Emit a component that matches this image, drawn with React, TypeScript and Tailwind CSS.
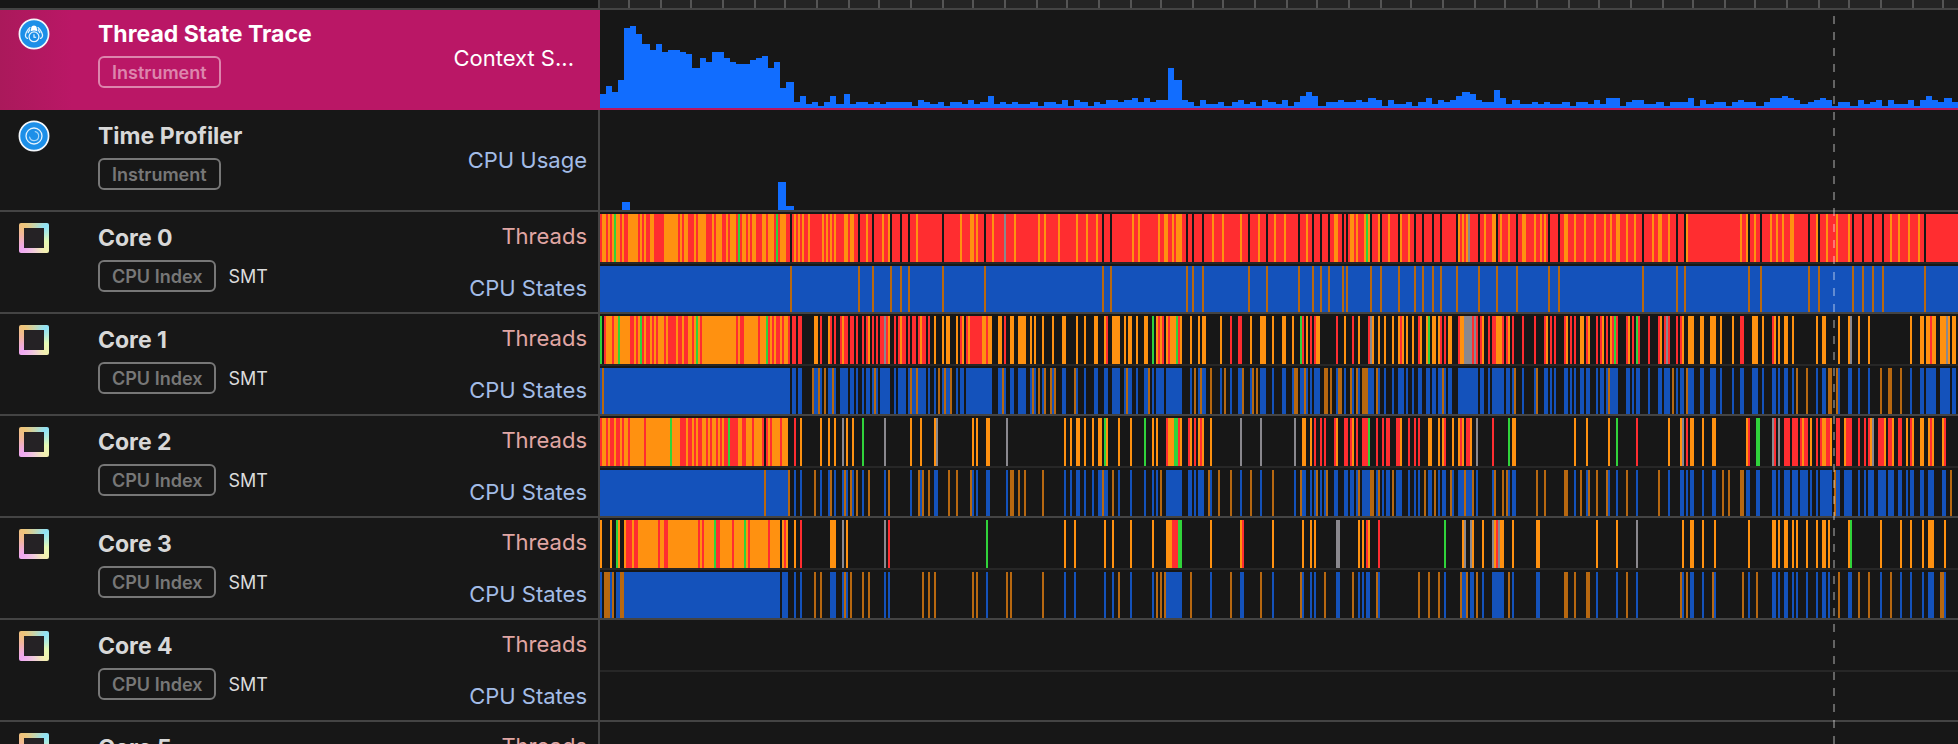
import React from 'react';

const CELLS = 679;

const COLOURS: Record<string, string> = {
  r: '#ff2d30',
  o: '#ff9110',
  g: '#30d33b',
  y: '#8a888e',
};

const RULER_TICKS = [
  14, 30, 45, 61, 77, 92, 108, 124, 139, 155, 171, 186, 202, 218, 233, 249, 265, 280, 296, 311, 327,
  343, 358, 374, 390, 405, 421, 437, 452, 468, 484, 499, 515, 531, 546, 562, 577, 593, 609, 624, 640,
  656, 671,
];

// "start:height" steps; each step holds until the next one.
const CONTEXT_SWITCHES =
  '0:7 3:11 6:8 9:14 12:40 15:41 18:37 21:32 25:29 28:32 31:28 34:29 40:28 43:27 46:20 50:25 53:23 56:28 62:25 65:23 68:22 75:24 78:25 81:26 84:20 87:23 90:10 93:13 97:3 100:6 103:2 106:3 109:1 112:3 115:6 118:2 122:7 125:2 128:3 134:2 137:3 140:2 143:3 156:1 159:4 162:3 165:2 169:3 172:1 175:3 181:2 184:4 187:2 190:3 194:6 197:2 200:3 203:2 206:3 209:2 215:3 219:1 222:3 228:2 ' +
  '231:4 234:1 237:4 240:3 244:1 247:3 250:2 253:4 259:3 262:4 266:5 269:3 272:5 275:3 278:4 284:20 287:14 291:4 294:3 297:1 300:4 303:2 309:3 312:1 316:3 319:4 322:2 325:3 328:1 331:4 334:3 338:2 341:4 344:1 347:3 350:6 353:8 356:6 359:1 363:3 369:4 372:3 378:4 381:3 384:5 388:4 391:1 394:4 397:2 403:3 406:1 409:3 413:5 416:2 419:4 422:3 425:4 428:6 431:8 435:7 438:4 441:3 447:9 ' +
  '450:5 453:2 456:4 460:2 466:3 469:2 472:3 475:2 481:3 485:1 488:3 494:2 497:4 500:2 503:5 510:1 513:3 516:4 522:2 528:3 532:1 535:3 544:5 547:1 550:4 553:2 557:3 563:1 566:3 569:4 572:3 578:1 582:3 585:5 591:6 594:5 597:4 600:2 604:3 607:4 610:5 613:4 616:1 619:3 625:1 629:4 632:2 635:3 638:4 641:1 644:4 647:2 654:4 657:1 660:4 663:6 666:4 669:3 672:5 676:3';

const CPU_USAGE = '11:4 15:0 89:14 93:2 97:0';

interface CoreData {
  // Colour changes: a colour key and the cell where it begins ("k" is idle).
  threads: string;
  // Cells (or cell ranges) where the core is in the interrupt state.
  interrupts: string;
}

const CORES: CoreData[] = [
  {
    threads:
      'r0 o1 r3 o4 r5 o6 g7 o8 r10 o11 r12 o14 r19 o20 r21 o22 r23 o25 r27 o32 r39 o40 r41 o42 r44 o47 r48 o49 r53 o56 r57 o58 r61 o63 r64 o65 r68 g69 r70 o71 r73 o74 r75 o76 r78 o81 r83 o84 r87 g88 r89 o90 r93 k95 r96 o97 r98 o99 r100 o101 r102 o104 r105 o111 r112 o113 r114 o115 r116 o117 r118 o122 r124 o125 r127 k129 r130 o133 r134 k136 r137 o141 r142 o144 k145 r146 k150 r151 k154 r155 o158 r159 k171 r172 o180 r181 o185 r187 o188 r189 k192 r193 o196 r197 y202 r203 o207 r208 o219 r220 o222 r223 o229 ' +
      'r230 o238 r239 o243 r244 o248 r249 k251 r252 k255 r256 o266 r267 o269 r270 o279 r280 o282 r284 o286 r287 o288 r291 k293 r294 k296 r297 k301 r302 o306 r307 o311 r312 o320 r321 k324 r325 o329 r330 k333 r334 o337 r338 o342 r343 k349 r350 o353 r354 k356 r357 k360 r361 k364 r365 o367 r369 k371 r372 k373 r374 o375 r377 o378 r379 o382 g383 o384 k385 r386 o389 k390 r391 o394 r395 k399 o400 r401 o404 r405 k407 r408 k411 r412 k416 r417 k420 r421 k428 o429 r430 o431 r432 o433 y434 r435 k439 r440 o442 r443 o446 k448 r449 ' +
      'o450 r451 o454 r455 k458 r459 o461 r463 o467 r468 o470 r471 o472 r473 k474 r475 k479 r480 o482 r484 o487 r488 o492 r493 o497 r498 o502 r503 o505 r506 o508 r510 o513 r514 o517 r518 k521 r522 o526 r527 o529 r531 o534 r535 k538 r539 k542 o543 r544 o570 r571 o573 k574 r575 o577 r578 k580 r581 o585 r586 o588 r589 o591 r592 o595 r597 k604 r605 o608 k609 r610 o613 r614 o618 r619 o624 r625 k626 r627 k631 r632 k636 r637 k641 r642 o645 r646 o649 r650 o654 r655 o659 r660 k662 r663',
    interrupts:
      '95 129 136 145 150 154 171 192 251 255 293 296 301 324 333 349 356 360 364 371 373 385 390 399 407 411 416 420 428 439 448 458 474 479 521 538 542 574 580 604 609 626 631 636 641 662',
  },
  {
    threads:
      'g0 k1 r2 o3 r6 o7 g9 o10 r15 o17 r18 o19 g20 r21 o22 r23 o25 r26 o27 r28 o29 r32 o33 r34 o38 r39 o41 r42 o44 r46 o47 g48 o49 r50 o51 r68 o69 r70 o72 r79 o80 g83 r84 o85 r86 o87 r88 o90 r91 o92 r94 k95 r96 k98 r99 k101 o107 k109 r110 k111 o114 r115 k116 r117 k118 r120 o121 r122 k124 r125 k127 r128 k129 r131 k132 r133 o134 k135 r136 k137 r138 k139 r140 y142 r143 o144 k145 r147 k148 r149 o150 r151 k153 r154 k155 r156 k158 r159 o160 r161 k163 r164 k165 o167 k168 o171 k172 o173 k175 o178 k179 r180 o181 k182 r183 o184 r185 o191 r193 o194 k196 o199 k201 r202 k203 o205 k207 o209 k213 o215 k216 o217 k218 o221 k222 o226 k227 ' +
      'o231 k233 o238 k239 o242 k243 o247 k249 o252 r253 k254 o256 k260 o262 k263 o264 k266 o268 k269 o272 k274 g276 k277 o278 r279 o280 r281 k282 o283 r284 o285 g288 r289 o290 k291 o295 k296 o299 k300 o301 k303 o310 k311 r315 k316 r319 k321 o325 k326 o330 k333 o336 k337 o341 k343 o346 k347 g350 r351 k352 o353 k354 r355 k356 r357 o358 k360 r368 k369 o372 k373 r376 k377 o379 k380 r384 y385 o386 k387 o389 k390 o392 k393 o396 k397 o399 r400 o401 k402 o403 k404 o406 k407 r409 o410 k411 o413 g414 k415 o416 k418 o419 r420 k421 r422 k423 o424 k426 r429 o430 y432 r436 y437 r438 k439 r440 o441 k442 r444 k445 r446 o448 r451 k452 r453 o454 k455 r456 k457 ' +
      'r461 k462 r467 k468 r472 o473 k474 r475 k476 r477 k478 r482 o483 k484 r485 k486 r487 k488 o490 k492 r493 o494 k495 r498 k499 r500 o501 k502 r503 k504 o505 r506 g507 r508 k509 r513 o514 k515 r516 k517 g518 r519 k520 r524 k525 r529 o530 k531 r532 y533 r534 k535 r538 k539 r540 o541 k542 o544 k547 o550 k552 o555 k558 o560 k561 o566 k567 r570 k572 o576 k579 o581 k582 r586 o587 k588 o589 k590 o592 k594 o596 k597 o608 k609 o611 k613 o619 k620 o624 y625 k626 o629 k630 o634 k635 o655 k656 o660 k662 o663 r665 o666 k668 o670 y673 o674 k675 o676 k678',
    interrupts:
      '1 106 109 112 116 137 155 158 169 172 175 201 216 219 222 225 227 237 263 274 297 300 305 312 321 326 328 347-348 352 362-363 365 369-370 375 378 381-383 388 421 457 468 504 536 543 598 603 614-615 618 640 644-645 650',
  },
  {
    threads:
      'r0 o1 r3 o4 r5 o7 r8 o10 r11 o12 r14 o15 r22 o23 g35 o36 r40 o43 r44 o46 r47 o48 r49 o51 r53 o54 r55 o56 r58 o59 r60 o61 r62 g64 r65 o69 r71 o73 r76 o77 r81 k82 r83 o84 r85 o86 r90 o91 k94 r97 k98 o100 k101 o110 k111 o114 k115 o117 k118 y121 k122 o123 k124 o126 k127 g131 k132 y142 k143 o155 k156 o160 k161 o167 y168 k169 o186 k187 o188 k189 o193 k195 y203 k204 ' +
      'o232 k233 o235 k236 o238 k240 o242 k243 o246 k247 o249 k251 g252 o253 k254 o259 k260 o265 k266 g272 k273 o276 k277 o278 k279 r283 o284 g287 r289 o290 k291 r294 o295 k296 r297 k298 o299 r300 o301 k302 o305 k306 y320 k321 y330 k331 y347 k348 o351 k353 o355 k356 r357 k358 r360 k361 r362 k363 r367 o368 k369 r372 k374 r375 o376 k377 r378 k379 r381 g384 k385 r388 k389 r391 k392 r393 k395 r398 o400 k401 r404 k405 r407 k408 r409 k410 o414 k416 o419 k420 o421 r422 k423 o426 k427 o429 r430 o431 k432 r433 o435 k436 y438 k439 r446 k447 g454 k455 o456 k458 ' +
      'o487 k488 o493 k494 o504 k505 g508 k509 r518 k519 o534 k535 o540 y541 k542 r543 k544 o545 k547 o551 k552 o556 k558 o573 r574 k575 g578 k580 y586 r587 k588 y589 k590 r592 k595 r596 k599 r600 o601 r602 k604 o605 k606 r608 k609 r610 o611 r613 o615 k616 r618 k620 o622 r623 k626 r629 k630 r632 k633 r634 o635 y636 k637 r639 o642 k643 r644 o646 k647 r649 k651 o653 k654 r655 o656 k657 o660 k662 o664 r665 o666 k667 o671 r672 k673',
    interrupts:
      '82 94 107 115 122 125 128 134 144 159 161 164 174 178 185 205-206 209 212 221 251 256 280 304 309 315 325 336 350 358 363 379 385-386 389 396 412 417 425 432 436 447 451 453 468 472 482-483 490 494 498 503 513 529 561 564 570-571 617 675',
  },
  {
    threads:
      'o0 k1 o5 k6 g8 o9 k10 o12 r13 o16 r17 o19 r29 o30 r32 o34 r49 o50 r51 o52 g57 r58 o60 r66 o67 g72 o73 r74 o75 r84 o85 k90 o91 r92 o93 k94 o97 k98 r100 k101 o115 k118 y121 k122 o123 k124 y142 k143 r144 k145 g193 k194 ' +
      'o232 k233 o237 k238 o252 k253 o256 k257 o265 k266 o276 k277 o283 r286 g289 k291 o305 k306 o320 r321 k322 o336 k337 o351 k352 o355 k356 o357 k358 y368 k370 o379 k380 o381 k382 r383 o384 k385 r389 k390 g422 k423 o431 y432 k433 y435 o436 k437 o441 k442 y446 o447 r448 y449 o450 k452 o456 k457 ' +
      'o468 k470 o498 k499 o508 k509 y518 k519 o541 k542 o545 k547 o551 k552 o557 k558 o574 k575 o586 k588 o589 k590 o592 k594 o596 k597 o598 k599 o603 k604 o608 k609 o611 k613 o614 k615 o624 g625 k626 o640 k641 o650 k651 o655 k656 o661 k662 o664 k667 o672 k673',
    interrupts:
      '2-4 6 10-11 107 110 122 125 131 134 161 164 167 186 188 203 205 221 259 278 280 282 295 315 330 350 362 376 388 409 414 419 430 433 438 454 482-483 487 493-494 513 540 543 556 571 578 619 629 634 645 670-671',
  },
  { threads: '', interrupts: '' },
  { threads: '', interrupts: '' },
];

interface Segment {
  start: number;
  end: number;
  value: string;
}

function parseThreads(source: string): Segment[] {
  const marks = source.split(' ').filter(Boolean);
  return marks
    .map((mark, i) => ({
      value: mark[0],
      start: Number(mark.slice(1)),
      end: i + 1 < marks.length ? Number(marks[i + 1].slice(1)) : CELLS,
    }))
    .filter((s) => s.value !== 'k');
}

function parseSteps(source: string): Segment[] {
  const steps = source.split(' ').map((s) => s.split(':'));
  return steps.map(([start, value], i) => ({
    start: Number(start),
    value,
    end: i + 1 < steps.length ? Number(steps[i + 1][0]) : CELLS,
  }));
}

function Histogram({ source, label }: { source: string; label: string }) {
  return (
    <svg
      className="block h-full w-full"
      viewBox={`0 0 ${CELLS} 49`}
      preserveAspectRatio="none"
      shapeRendering="crispEdges"
      role="img"
      aria-label={label}
    >
      {parseSteps(source).map((s) => (
        <rect
          key={s.start}
          x={s.start}
          y={49 - Number(s.value)}
          width={s.end - s.start}
          height={Number(s.value)}
          fill="#116dff"
        />
      ))}
    </svg>
  );
}

function Strip({ segments, label }: { segments: { start: number; end: number; fill: string }[]; label: string }) {
  return (
    <svg
      className="block h-full w-full"
      viewBox={`0 0 ${CELLS} 1`}
      preserveAspectRatio="none"
      shapeRendering="crispEdges"
      role="img"
      aria-label={label}
    >
      {segments.map((s) => (
        <rect key={`${s.start}${s.fill}`} x={s.start} y={0} width={s.end - s.start} height={1} fill={s.fill} />
      ))}
    </svg>
  );
}

function CoreTracks({ core }: { core: CoreData }) {
  const threads = parseThreads(core.threads);
  const interrupts = core.interrupts
    .split(' ')
    .filter(Boolean)
    .map((range) => {
      const [from, to] = range.split('-').map(Number);
      return { start: from, end: (to ?? from) + 1, fill: '#b86810' };
    });
  const running: { start: number; end: number; fill: string }[] = [];
  threads.forEach((t) => {
    const last = running[running.length - 1];
    if (last && last.end === t.start) last.end = t.end;
    else running.push({ start: t.start, end: t.end, fill: '#1452bb' });
  });
  return (
    <div className="flex h-full flex-col pt-0.5">
      <div className="h-12">
        <Strip label="Threads" segments={threads.map((t) => ({ ...t, fill: COLOURS[t.value] }))} />
      </div>
      <div className="mb-0.5 h-0.5 bg-[#272727]" />
      <div className="min-h-0 flex-1">
        <Strip label="CPU States" segments={[...running, ...interrupts]} />
      </div>
    </div>
  );
}

function ThreadStateIcon() {
  return (
    <svg viewBox="0 0 32 32" className="size-8" fill="none" aria-hidden="true">
      <circle cx="16" cy="16" r="14.6" fill="#1c8fe8" stroke="#f4f8fc" strokeWidth="1.7" />
      <path d="M12.6 13.4 13.4 9Q13.8 7.4 16 7.4T18.6 9L19.4 13.4Q16 11.6 12.6 13.4Z" fill="#fff" />
      <path
        d="M12 9.6C9.4 11.6 9.2 13 8 15.2 6.8 17.6 7.6 19.6 9.4 20.4M20 9.6C22.6 11.6 22.8 13 24 15.2 25.2 17.6 24.4 19.6 22.6 20.4M11.8 11.8 10.2 14.6M20.2 11.8 21.8 14.6"
        stroke="#e4f2fd"
        strokeWidth="1.3"
        strokeLinecap="round"
      />
      <circle cx="16" cy="18.8" r="4.9" stroke="#e4f2fd" strokeWidth="1.3" />
      <path d="M16 16.2V19.3H18.2" stroke="#fff" strokeWidth="1.1" />
    </svg>
  );
}

function TimeProfilerIcon() {
  return (
    <svg viewBox="0 0 32 32" className="size-8" fill="none" aria-hidden="true">
      <circle cx="16" cy="16" r="14.6" fill="#1c8fe8" stroke="#f4f8fc" strokeWidth="1.7" />
      <circle cx="16" cy="16" r="8" stroke="#e4f2fd" strokeWidth="1.3" />
      <path d="M17.2 11.6A4.6 4.6 0 1 1 11.6 17.2" stroke="#a9d6f8" strokeWidth="1.2" strokeLinecap="round" />
    </svg>
  );
}

function CoreIcon() {
  return (
    <span className="block size-8 p-px">
      <span className="block size-full rounded-xs bg-[conic-gradient(from_45deg,#8fe3f8,#e6fbb4_60deg,#f3efb0_95deg,#f0d0d8_130deg,#f0a8f4_180deg,#f3b79c_240deg,#efc478_275deg,#c4d6b0_320deg,#8fe3f8)] p-[5px]">
        <span className="block size-full bg-[#252225]" />
      </span>
    </span>
  );
}

interface RowProps {
  icon: React.ReactNode;
  title: string;
  badge: string;
  note?: string;
  selected?: boolean;
  labels: React.ReactNode;
  children: React.ReactNode;
}

function Row({ icon, title, badge, note, selected, labels, children }: RowProps) {
  return (
    <section
      className={
        selected
          ? 'flex h-[100px] shrink-0'
          : 'flex h-[102px] shrink-0 border-b-2 border-[#444444]'
      }
    >
      <div
        className={
          selected
            ? 'flex w-[600px] shrink-0 bg-linear-to-r from-[#aa195b] to-[#ba1766] to-12% pl-[18px]'
            : 'flex w-[600px] shrink-0 border-r-2 border-[#444444] pl-[18px]'
        }
      >
        <div className={selected ? 'flex min-w-0 flex-1 pt-2' : 'flex min-w-0 flex-1 pt-2.5'}>
          <div className="w-20 shrink-0">{icon}</div>
          <div className="min-w-0 flex-1">
            <h2
              className={
                selected
                  ? 'text-[23px] leading-8 font-bold text-white'
                  : 'text-[23px] leading-8 font-bold text-[#d8d8d8]'
              }
            >
              {title}
            </h2>
            <div className="mt-1.5 flex items-center gap-3">
              <span
                className={
                  selected
                    ? 'flex h-8 items-center rounded-md border-2 border-[#dd85ad] px-3 pt-px text-lg font-semibold text-[#dd85ad]'
                    : 'flex h-8 items-center rounded-md border-2 border-[#777777] px-3 pt-px text-lg font-semibold text-[#777777]'
                }
              >
                {badge}
              </span>
              {note && <span className="pt-px text-lg text-[#dcdcdc]">{note}</span>}
            </div>
          </div>
        </div>
        {labels}
      </div>
      <div
        className={
          selected
            ? 'min-w-0 flex-1 border-b-2 border-[#b8185f]'
            : 'min-w-0 flex-1'
        }
      >
        {children}
      </div>
    </section>
  );
}

export default function App() {
  return (
    <main className="relative flex h-screen flex-col overflow-hidden bg-[#171717] font-['Inter','Liberation_Sans',sans-serif]">
      <header className="flex h-2.5 shrink-0 border-b-2 border-[#444444]">
        <div className="w-[600px] shrink-0 border-r-2 border-[#444444]" />
        <div className="min-w-0 flex-1 bg-[#242424]">
          <svg
            className="block h-full w-full"
            viewBox={`0 0 ${CELLS} 1`}
            preserveAspectRatio="none"
            shapeRendering="crispEdges"
            aria-hidden="true"
          >
            {RULER_TICKS.map((x) => (
              <rect key={x} x={x} y={0} width={1} height={1} fill="#555555" />
            ))}
          </svg>
        </div>
      </header>

      <Row
        selected
        icon={<ThreadStateIcon />}
        title="Thread State Trace"
        badge="Instrument"
        labels={<p className="self-center pr-[26px] pb-1 text-[22px] leading-8 text-white">Context S...</p>}
      >
        <Histogram source={CONTEXT_SWITCHES} label="Context switches" />
      </Row>

      <Row
        icon={<TimeProfilerIcon />}
        title="Time Profiler"
        badge="Instrument"
        labels={<p className="self-center pr-[11px] text-[22px] leading-8 text-[#a3bce6]">CPU Usage</p>}
      >
        <div className="flex h-full items-end">
          <div className="h-[98px] w-full">
            <Histogram source={CPU_USAGE} label="CPU usage" />
          </div>
        </div>
      </Row>

      {CORES.map((core, i) => (
        <Row
          key={i}
          icon={<CoreIcon />}
          title={`Core ${i}`}
          badge="CPU Index"
          note="SMT"
          labels={
            <div className="flex flex-col justify-between py-2 pr-[11px] text-right text-[22px] leading-8">
              <p className="text-[#e0a6a4]">Threads</p>
              <p className="text-[#a3bce6]">CPU States</p>
            </div>
          }
        >
          <CoreTracks core={core} />
        </Row>
      ))}

      <div className="pointer-events-none absolute inset-y-0 right-0 left-[600px]">
        <div className="absolute top-4 bottom-0 left-[90.8%] w-0.5 bg-[repeating-linear-gradient(to_bottom,#ffffff55_0px,#ffffff55_8px,transparent_8px,transparent_16px)]" />
      </div>
    </main>
  );
}
